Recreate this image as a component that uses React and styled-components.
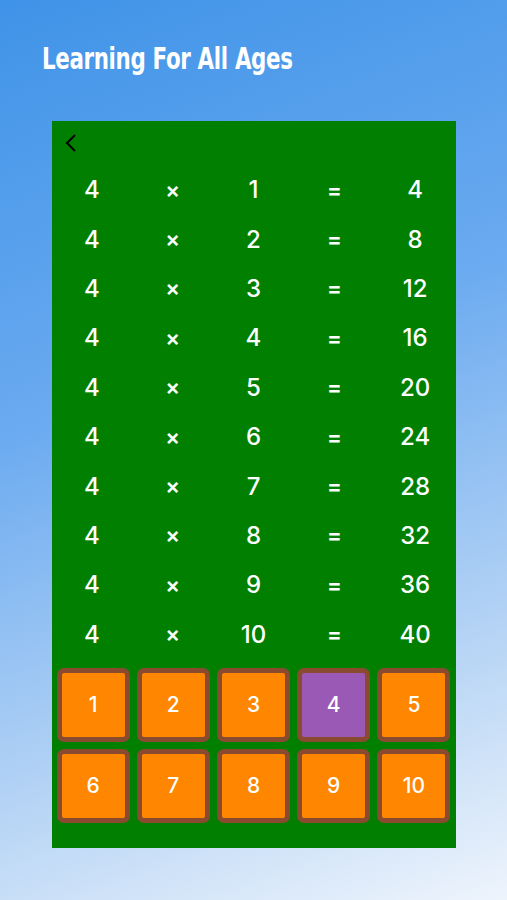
import React, { useState } from 'react';
import styled, { createGlobalStyle } from 'styled-components';

const GlobalStyle = createGlobalStyle`
  html, body {
    margin: 0;
    padding: 0;
  }
  body {
    font-family: Inter, 'Open Sans', 'Liberation Sans', sans-serif;
  }
`;

const Page = styled.div`
  width: 507px;
  height: 900px;
  box-sizing: border-box;
  padding-top: 38px;
  background: linear-gradient(160deg, #3f93e8 0%, #6aaaf0 40%, #b6d4f5 75%, #eef4fc 100%);
  overflow: hidden;
`;

const Title = styled.h1`
  margin: 0 0 0 42px;
  font-family: 'DejaVu Sans', 'Liberation Sans', sans-serif;
  font-weight: 700;
  font-size: 31px;
  line-height: 40px;
  letter-spacing: -0.5px;
  color: #ffffff;
  white-space: nowrap;
  transform: scaleX(0.69);
  transform-origin: left center;
`;

const Panel = styled.div`
  width: 404px;
  margin: 43px auto 0;
  padding-bottom: 25px;
  background: #007f00;
`;

const Header = styled.div`
  height: 43px;
  display: flex;
  align-items: center;
  padding-left: 12px;
`;

const BackButton = styled.button`
  border: none;
  background: none;
  padding: 0;
  width: 16px;
  height: 22px;
  cursor: pointer;
  display: flex;
`;

const Row = styled.div`
  display: grid;
  grid-template-columns: repeat(5, 1fr);
  height: 49.4px;
  padding-top: 2px;
  box-sizing: border-box;
  align-items: center;
  text-align: center;
  color: #ffffff;
`;

const Cell = styled.span`
  font-size: ${(p) => (p.$op ? '22px' : '24px')};
  font-weight: ${(p) => (p.$op ? 600 : 500)};
`;

const Keypad = styled.div`
  display: grid;
  grid-template-columns: repeat(5, 1fr);
  gap: 7px;
  padding: 10px 5px 0;
`;

const Key = styled.button`
  height: 74px;
  box-sizing: border-box;
  border: 5px solid #8a4a30;
  border-radius: 7px;
  background: ${(p) => (p.$active ? '#9b59b6' : '#ff8600')};
  color: #ffffff;
  font-family: Inter, 'Open Sans', 'Liberation Sans', sans-serif;
  font-size: 21px;
  font-weight: 500;
  cursor: pointer;
  padding: 0;
`;

export default function App() {
  const [table, setTable] = useState(4);
  const rows = Array.from({ length: 10 }, (_, i) => i + 1);

  return (
    <Page>
      <GlobalStyle />
      <Title>Learning For All Ages</Title>
      <Panel>
        <Header>
          <BackButton aria-label="back">
            <svg width="16" height="22" viewBox="0 0 16 22">
              <polyline points="11,3 3,11 11,19" fill="none" stroke="#000" strokeWidth="2" />
            </svg>
          </BackButton>
        </Header>
        {rows.map((n) => (
          <Row key={n}>
            <Cell>{table}</Cell>
            <Cell $op>×</Cell>
            <Cell>{n}</Cell>
            <Cell $op>=</Cell>
            <Cell>{table * n}</Cell>
          </Row>
        ))}
        <Keypad>
          {rows.map((n) => (
            <Key key={n} $active={n === table} onClick={() => setTable(n)}>
              {n}
            </Key>
          ))}
        </Keypad>
      </Panel>
    </Page>
  );
}
